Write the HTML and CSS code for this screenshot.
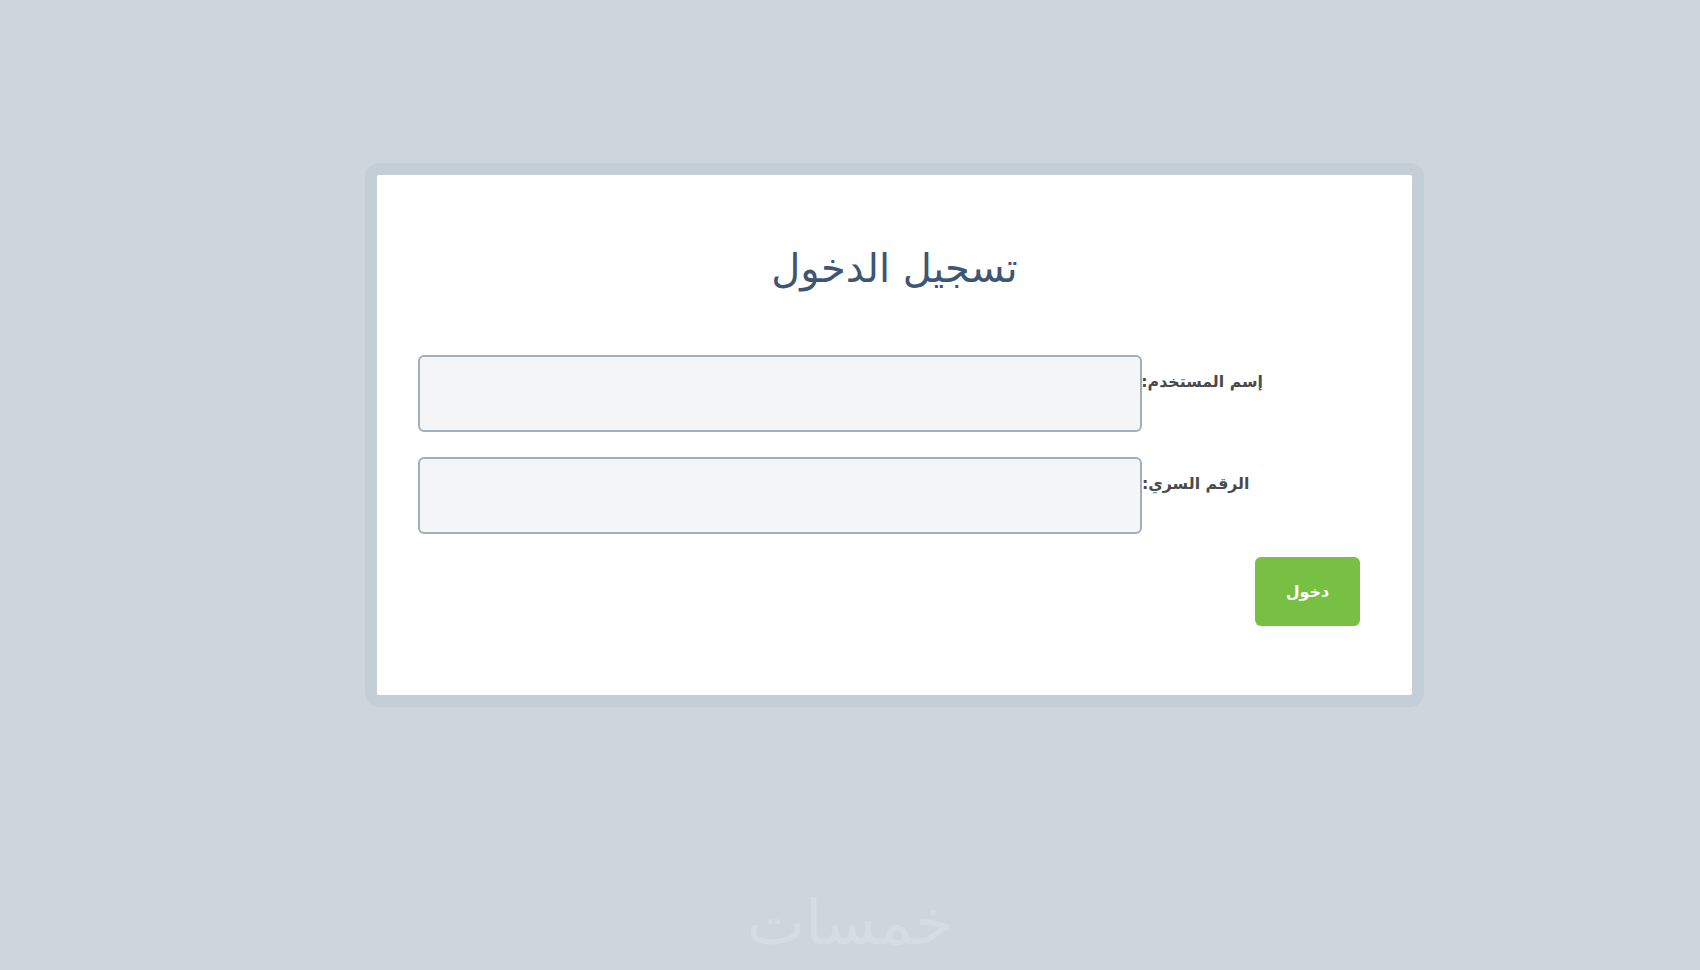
FILE: index.html
```html
<!DOCTYPE html>
<html lang="ar" dir="rtl">
<head>
    <meta charset="UTF-8">
    <meta name="viewport" content="width=device-width, initial-scale=1.0">
    <title>تسجيل الدخول</title>
    <link rel="stylesheet" href="styles.css">
</head>
<body>

<div class="page">
    <div class="login-box">
        <h2>تسجيل الدخول</h2>

        <form class="login-form" onsubmit="return false;">
            <div class="field">
                <label for="username">إسم المستخدم:</label>
                <input type="text" id="username">
            </div>
            <div class="field">
                <label for="password">الرقم السري:</label>
                <input type="password" id="password">
            </div>
            <div class="actions">
                <button type="submit">دخول</button>
            </div>
        </form>
    </div>
</div>

<div class="watermark">خمسات</div>

</body>
</html>
```

FILE: styles.css
```css
* {
    box-sizing: border-box;
    margin: 0;
    padding: 0;
}
body {
    background: #cdd6dd;
    font-family: 'DejaVu Sans', 'Liberation Sans', sans-serif;
    height: 970px;
    overflow: hidden;
    position: relative;
}
.page {
    padding-top: 163px;
    direction: ltr;
}
.login-box {
    direction: rtl;
    margin-left: 365px;
    width: 1059px;
    height: 544px;
    background: #fff;
    border: 12px solid #c3ced6;
    border-radius: 14px;
    padding-top: 65px;
}
h2 {
    text-align: center;
    font-size: 40px;
    font-weight: normal;
    line-height: 56px;
    color: #3c5674;
}
.login-form {
    margin-top: 59px;
}
.field {
    display: flex;
    align-items: flex-start;
    padding-right: 149px;
    padding-left: 41px;
    margin-bottom: 25px;
}
.field + .field {
    margin-bottom: 23px;
}
.field label {
    width: 121px;
    margin-top: 17px;
    font-size: 15.8px;
    font-weight: bold;
    color: #4a4a4a;
    white-space: nowrap;
    text-align: left;
}
.field input {
    flex: 1;
    height: 77px;
    background: #f3f5f7;
    border: 2px solid #a3afb8;
    border-radius: 6px;
}
.actions {
    padding-right: 52px;
}
.actions button {
    width: 105px;
    height: 69px;
    background: #78c043;
    color: #fff;
    border: none;
    border-radius: 6px;
    font-family: inherit;
    font-size: 16px;
    font-weight: bold;
    cursor: pointer;
}
.watermark {
    position: absolute;
    left: 730px;
    top: 886px;
    width: 240px;
    text-align: center;
    font-size: 62px;
    color: #d6dde2;
}
```
